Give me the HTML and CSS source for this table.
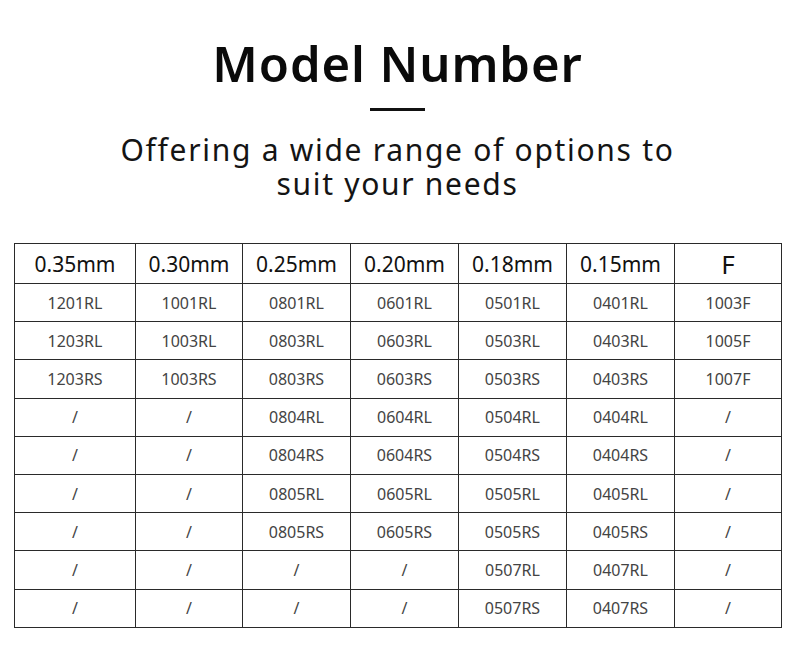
FILE: index.html
```html
<!DOCTYPE html>
<html>
<head>
<meta charset="utf-8">
<link rel="stylesheet" href="styles.css">
</head>
<body>
<div class="page">
  <header class="head">
    <h1 class="title">Model Number</h1>
    <div class="bar"></div>
    <p class="sub">Offering a wide range of options to<br>suit your needs</p>
  </header>
  <table class="models">
    <colgroup>
      <col class="c1"><col class="c2"><col class="c3"><col class="c4"><col class="c5"><col class="c6"><col class="c7">
    </colgroup>
    <thead>
      <tr><th>0.35mm</th><th>0.30mm</th><th>0.25mm</th><th>0.20mm</th><th>0.18mm</th><th>0.15mm</th><th class="f">F</th></tr>
    </thead>
    <tbody>
      <tr><td>1201RL</td><td>1001RL</td><td>0801RL</td><td>0601RL</td><td>0501RL</td><td>0401RL</td><td>1003F</td></tr>
      <tr><td>1203RL</td><td>1003RL</td><td>0803RL</td><td>0603RL</td><td>0503RL</td><td>0403RL</td><td>1005F</td></tr>
      <tr><td>1203RS</td><td>1003RS</td><td>0803RS</td><td>0603RS</td><td>0503RS</td><td>0403RS</td><td>1007F</td></tr>
      <tr><td>/</td><td>/</td><td>0804RL</td><td>0604RL</td><td>0504RL</td><td>0404RL</td><td>/</td></tr>
      <tr><td>/</td><td>/</td><td>0804RS</td><td>0604RS</td><td>0504RS</td><td>0404RS</td><td>/</td></tr>
      <tr><td>/</td><td>/</td><td>0805RL</td><td>0605RL</td><td>0505RL</td><td>0405RL</td><td>/</td></tr>
      <tr><td>/</td><td>/</td><td>0805RS</td><td>0605RS</td><td>0505RS</td><td>0405RS</td><td>/</td></tr>
      <tr><td>/</td><td>/</td><td>/</td><td>/</td><td>0507RL</td><td>0407RL</td><td>/</td></tr>
      <tr><td>/</td><td>/</td><td>/</td><td>/</td><td>0507RS</td><td>0407RS</td><td>/</td></tr>
    </tbody>
  </table>
</div>
</body>
</html>
```
FILE: styles.css
```css
* { box-sizing: border-box; }
html, body { margin: 0; padding: 0; background: #fff; }
body { font-family: "Noto Sans", "Open Sans", sans-serif; color: #111; }
.page { width: 800px; height: 660px; padding-top: 33px; }
.head { display: flex; flex-direction: column; align-items: center; padding-right: 5px; }
.title {
  margin: 0;
  font-size: 49px;
  font-weight: 600;
  line-height: 60px;
  letter-spacing: 0.9px;
  color: #0a0a0a;
}
.bar { width: 55px; height: 3px; background: #111; margin-top: 15px; }
.sub {
  margin: 22px 0 0;
  font-size: 30px;
  font-weight: 400;
  line-height: 34px;
  text-align: center;
  letter-spacing: 1.7px;
  color: #141414;
}
.models {
  margin: 42px 0 0 14px;
  width: 767px;
  border-collapse: collapse;
  table-layout: fixed;
}
.c1 { width: 121px; }
.c2 { width: 107px; }
.c3 { width: 108px; }
.c4 { width: 108px; }
.c5 { width: 108px; }
.c6 { width: 108px; }
.c7 { width: 107px; }
.models th, .models td {
  border: 1px solid #2a2a2a;
  text-align: center;
  padding: 0;
}
.models th {
  height: 40px;
  font-size: 21px;
  font-weight: 400;
  color: #111;
}
.models th.f { font-size: 26px; }
.models td {
  height: 38.2px;
  font-size: 16px;
  font-weight: 400;
  color: #444;
}
```
